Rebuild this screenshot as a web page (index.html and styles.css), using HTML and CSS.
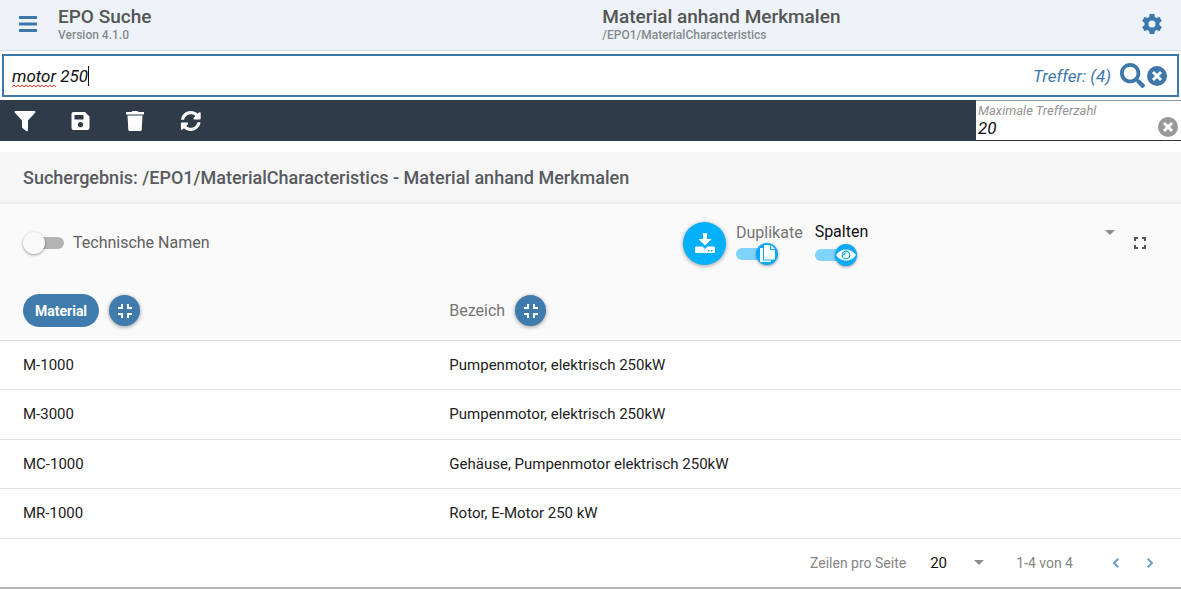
FILE: index.html
```html
<!DOCTYPE html>
<html lang="de">
<head>
<meta charset="utf-8">
<meta name="viewport" content="width=device-width, initial-scale=1">
<title>EPO Suche</title>
<link rel="stylesheet" href="styles.css">
</head>
<body>
<header class="app-header">
  <div class="brand">
    <button class="icon-btn menu-btn" type="button" aria-label="Menü">
      <svg width="18" height="16" viewBox="0 0 18 16"><path d="M0 0h18v3H0zM0 6.500h18v3H0zM0 13h18v3H0z"/></svg>
    </button>
    <div class="heading">
      <h1 class="title">EPO Suche</h1>
      <p class="subtitle">Version 4.1.0</p>
    </div>
  </div>
  <div class="heading context">
    <h2 class="title">Material anhand Merkmalen</h2>
    <p class="subtitle">/EPO1/MaterialCharacteristics</p>
  </div>
  <button class="icon-btn" type="button" aria-label="Einstellungen">
    <svg width="24" height="24" viewBox="0 0 24 24"><path d="M12,15.500A3.500,3.500 0 0,1 8.500,12A3.500,3.500 0 0,1 12,8.500A3.500,3.500 0 0,1 15.500,12A3.500,3.500 0 0,1 12,15.500M19.430,12.970C19.470,12.650 19.500,12.330 19.500,12C19.500,11.670 19.470,11.340 19.430,11L21.540,9.370C21.730,9.220 21.780,8.950 21.660,8.730L19.660,5.270C19.540,5.050 19.270,4.960 19.050,5.050L16.560,6.050C16.040,5.660 15.500,5.320 14.870,5.070L14.500,2.420C14.460,2.180 14.250,2 14,2H10C9.750,2 9.540,2.180 9.500,2.420L9.130,5.070C8.500,5.320 7.960,5.660 7.440,6.050L4.950,5.050C4.730,4.960 4.460,5.050 4.340,5.270L2.340,8.730C2.210,8.950 2.270,9.220 2.460,9.370L4.570,11C4.530,11.340 4.500,11.670 4.500,12C4.500,12.330 4.530,12.650 4.570,12.970L2.460,14.630C2.270,14.780 2.210,15.050 2.340,15.270L4.340,18.730C4.460,18.950 4.730,19.030 4.950,18.950L7.440,17.940C7.960,18.340 8.500,18.680 9.130,18.930L9.500,21.580C9.540,21.820 9.750,22 10,22H14C14.250,22 14.460,21.820 14.500,21.580L14.870,18.930C15.500,18.670 16.040,18.340 16.560,17.940L19.050,18.950C19.270,19.030 19.540,18.950 19.660,18.730L21.660,15.270C21.780,15.050 21.730,14.780 21.540,14.630L19.430,12.970Z"/></svg>
  </button>
</header>

<form class="search" role="search">
  <div class="search-field">
    <input class="search-input" type="text" value="motor 250" aria-label="Suche" spellcheck="false">
    <svg class="squiggle" width="44" height="4" viewBox="0 0 44 4"><path d="M0 3l2-2 2 2 2-2 2 2 2-2 2 2 2-2 2 2 2-2 2 2 2-2 2 2 2-2 2 2 2-2 2 2 2-2 2 2 2-2 2 2 2-2 2 2"/></svg>
    <span class="caret"></span>
  </div>
  <span class="hits">Treffer: (4)</span>
  <button class="icon-btn" type="button" aria-label="Suchen">
    <svg width="25" height="25" viewBox="0 0 512 512"><path d="M505 442.700L405.300 343c-4.500-4.500-10.600-7-17-7H372c27.600-35.300 44-79.700 44-128C416 93.100 322.900 0 208 0S0 93.100 0 208s93.100 208 208 208c48.300 0 92.700-16.400 128-44v16.300c0 6.400 2.500 12.500 7 17l99.700 99.700c9.400 9.400 24.600 9.400 33.900 0l28.300-28.300c9.400-9.400 9.400-24.600.1-34zM208 338c-72 0-130-58-130-130 0-72 58-130 130-130 72 0 130 58 130 130 0 72-58 130-130 130z"/></svg>
  </button>
  <button class="icon-btn" type="button" aria-label="Suche leeren">
    <svg width="20" height="20" viewBox="0 0 20 20"><circle cx="10" cy="10" r="10"/><path class="cross" d="M6 6l8 8M14 6l-8 8"/></svg>
  </button>
</form>

<div class="toolbar">
  <div class="tools">
    <button class="icon-btn tool" type="button" aria-label="Filter">
      <svg width="22" height="22" viewBox="0 0 22 22"><path d="M1.500 1h19c1 0 1.200 1 .6 1.700L14 10.500V20c0 1.200-.8 1.600-1.700 1L8.700 18.300c-.5-.4-.7-.8-.7-1.300v-6.500L.9 2.700C.3 2 .5 1 1.500 1z"/></svg>
    </button>
    <button class="icon-btn tool" type="button" aria-label="Speichern">
      <svg width="22" height="22" viewBox="0 0 22 22"><path fill-rule="evenodd" d="M4.500 2H16l4.500 4.500V18a2 2 0 0 1-2 2h-14a2 2 0 0 1-2-2V4a2 2 0 0 1 2-2zM5.500 5v4.500h9V5zM11.500 12a2.600 2.600 0 1 0 0 5.200 2.600 2.600 0 0 0 0-5.200z"/></svg>
    </button>
    <button class="icon-btn tool" type="button" aria-label="Löschen">
      <svg width="22" height="22" viewBox="0 0 22 22"><path d="M2 2h5.500l1-1h5l1 1H20v2.500H2zM3.500 5.500h15l-.8 14c-.1 1-.8 1.500-1.700 1.500H6c-.9 0-1.600-.5-1.700-1.500z"/></svg>
    </button>
    <button class="icon-btn tool" type="button" aria-label="Aktualisieren">
      <svg width="22" height="22" viewBox="-40 -20 552 552"><path d="M370.720 133.280C339.458 104.008 298.888 87.962 255.848 88c-77.458.068-144.328 53.178-162.791 126.850-1.344 5.363-6.122 9.150-11.651 9.150H24.103c-7.498 0-13.194-6.807-11.807-14.176C33.933 94.924 134.813 8 256 8c66.448 0 126.791 26.136 171.315 68.685L463.030 40.970C478.149 25.851 504 36.559 504 57.941V192c0 13.255-10.745 24-24 24H345.941c-21.382 0-32.090-25.851-16.971-40.971l41.750-41.749zM32 296h134.059c21.382 0 32.090 25.851 16.971 40.971l-41.750 41.750c31.262 29.273 71.835 45.319 114.876 45.280 77.418-.070 144.315-53.144 162.787-126.849 1.344-5.363 6.122-9.150 11.651-9.150h57.304c7.498 0 13.194 6.807 11.807 14.176C478.067 417.076 377.187 504 256 504c-66.448 0-126.791-26.136-171.315-68.685L48.970 471.030C33.851 486.149 8 475.441 8 454.059V320c0-13.255 10.745-24 24-24z"/></svg>
    </button>
  </div>
  <div class="max-hits">
    <div class="max-field">
      <label class="max-label" for="max">Maximale Trefferzahl</label>
      <input class="max-input" id="max" type="text" value="20">
    </div>
    <button class="icon-btn max-clear" type="button" aria-label="Leeren">
      <svg width="20" height="20" viewBox="0 0 20 20"><circle cx="10" cy="10" r="10"/><path class="cross" d="M6 6l8 8M14 6l-8 8"/></svg>
    </button>
  </div>
</div>

<main class="results">
  <h2 class="results-title">Suchergebnis: /EPO1/MaterialCharacteristics - Material anhand Merkmalen</h2>

  <div class="controls">
    <label class="switch-row">
      <span class="switch">
        <input class="track" type="checkbox">
        <span class="thumb"></span>
      </span>
      Technische Namen
    </label>
    <div class="actions">
      <button class="download" type="button" aria-label="Herunterladen">
        <svg width="22" height="22" viewBox="0 0 22 22"><path fill-rule="evenodd" d="M9 1h4v6h4.500L11 13.500 4.500 7H9zM2.500 14.500h6L11 17l2.500-2.500h6c1 0 1.500.5 1.500 1.500v3.500c0 1-.5 1.500-1.500 1.500h-17c-1 0-1.500-.5-1.500-1.500V16c0-1 .5-1.500 1.500-1.500zM14 18v1.500h1.500V18zM17 18v1.500h1.500V18z"/></svg>
      </button>
      <div class="option">
        <label class="option-label" for="dup">Duplikate</label>
        <span class="switch">
          <input class="track" id="dup" type="checkbox" checked>
          <span class="thumb"><svg width="22" height="22" viewBox="0 0 22 22"><path d="M4 5h3v12.500h8V19H4z"/><path d="M8 2h6v5h5v9.500H8zM15 2l4 4h-4z"/></svg></span>
        </span>
      </div>
      <div class="option option-wide">
        <div class="select-row">
          <select class="plain-select columns-select" id="cols" aria-label="Spalten"><option>Spalten</option></select>
          <svg class="arrow" width="10" height="5" viewBox="0 0 10 5"><path d="M0 0h10L5 5z"/></svg>
        </div>
        <span class="switch">
          <input class="track" type="checkbox" aria-label="Spalten anzeigen" checked>
          <span class="thumb"><svg width="22" height="22" viewBox="0 0 22 22"><path class="eye" d="M1 11C5.500 3.500 16.500 3.500 21 11 16.500 18.500 5.500 18.500 1 11z"/><circle class="iris" cx="11" cy="11" r="3.800"/><path class="iris" d="M9 11a2 2 0 0 1 2-2"/></svg></span>
        </span>
      </div>
      <button class="icon-btn fullscreen" type="button" aria-label="Vollbild">
        <svg width="12" height="12" viewBox="0 0 12 12"><path d="M0 0h4v2H2v2H0zM8 0h4v4h-2V2H8zM0 8h2v2h2v2H0zM10 8h2v4H8v-2h2z"/></svg>
      </button>
    </div>
  </div>

  <table class="table">
    <thead>
      <tr>
        <th class="col-material">
          <div class="head-cell">
            <button class="chip" type="button">Material</button>
            <button class="round" type="button" aria-label="Spalte Material verkleinern"><svg width="14" height="14" viewBox="0 0 14 14"><path d="M3 0h2v5H0V3h3zM9 0h2v3h3v2H9zM0 9h5v5H3v-3H0zM9 9h5v2h-3v3H9z"/></svg></button>
          </div>
        </th>
        <th>
          <div class="head-cell">
            <span>Bezeich</span>
            <button class="round" type="button" aria-label="Spalte Bezeich verkleinern"><svg width="14" height="14" viewBox="0 0 14 14"><path d="M3 0h2v5H0V3h3zM9 0h2v3h3v2H9zM0 9h5v5H3v-3H0zM9 9h5v2h-3v3H9z"/></svg></button>
          </div>
        </th>
      </tr>
    </thead>
    <tbody>
      <tr><td>M-1000</td><td>Pumpenmotor, elektrisch 250kW</td></tr>
      <tr><td>M-3000</td><td>Pumpenmotor, elektrisch 250kW</td></tr>
      <tr><td>MC-1000</td><td>Gehäuse, Pumpenmotor elektrisch 250kW</td></tr>
      <tr><td>MR-1000</td><td>Rotor, E-Motor 250 kW</td></tr>
    </tbody>
  </table>

  <footer class="pager">
    <label for="rows">Zeilen pro Seite</label>
    <div class="select-row rows-row">
      <select class="plain-select" id="rows"><option>20</option></select>
      <svg class="arrow" width="10" height="5" viewBox="0 0 10 5"><path d="M0 0h10L5 5z"/></svg>
    </div>
    <span class="range">1-4 von 4</span>
    <button class="icon-btn page-btn" type="button" aria-label="Vorherige Seite"><svg width="6" height="10" viewBox="0 0 6 10"><path d="M5.300 .7L1 5l4.300 4.300"/></svg></button>
    <button class="icon-btn page-btn" type="button" aria-label="Nächste Seite"><svg width="6" height="10" viewBox="0 0 6 10"><path d="M.7 .7L5 5 .7 9.300"/></svg></button>
  </footer>
</main>
</body>
</html>
```

FILE: styles.css
```css
* {
  box-sizing: border-box;
}

body {
  margin: 0;
  background: #fff;
  color: #212121;
  font: 16px/20px Roboto, "Liberation Sans", sans-serif;
}

h1, h2, p {
  margin: 0;
}

button, input, select {
  font: inherit;
  color: inherit;
}

svg {
  display: block;
  fill: currentColor;
}

.icon-btn {
  display: flex;
  align-items: center;
  justify-content: center;
  padding: 0;
  border: 0;
  background: none;
  color: #3e78ab;
}

.cross {
  fill: none;
  stroke: #fff;
  stroke-width: 3;
}

/* Header */
.app-header {
  display: flex;
  align-items: center;
  height: 51px;
  padding: 0 17px 2px 0;
  background: #edf3f8;
  border-bottom: 1px solid #d5dce2;
}

.brand {
  display: flex;
  align-items: center;
  gap: 21px;
  width: 51vw;
  padding-left: 19px;
}

.heading {
  padding-top: 2px;
}

.context {
  flex: 1;
}

.title {
  color: #555;
  font-size: 19px;
  font-weight: 500;
  line-height: 20px;
}

.subtitle {
  color: #868a8d;
  font-size: 12px;
  font-weight: 500;
  line-height: 16px;
}

/* Search */
.search {
  display: flex;
  align-items: center;
  height: 43px;
  margin: 3px 2px;
  padding: 0 10px 0 8px;
  border: 2px solid #3e78ab;
  background: #fff;
}

.search-field {
  position: relative;
  flex: 1;
}

.search-input {
  display: block;
  width: 100%;
  height: 24px;
  padding: 0;
  border: 0;
  outline: 0;
  background: none;
  color: #111;
  font-size: 17px;
  font-style: italic;
}

.squiggle {
  position: absolute;
  left: 0;
  bottom: 0;
  fill: none;
  stroke: #e53935;
}

.caret {
  position: absolute;
  left: 76px;
  top: 2px;
  width: 1px;
  height: 20px;
  background: #111;
}

.hits {
  margin-right: 9px;
  color: #3e78ab;
  font-size: 17px;
  font-style: italic;
}

.search .icon-btn + .icon-btn {
  margin-left: 2px;
}

/* Toolbar */
.toolbar {
  display: flex;
  height: 41px;
  background: #2f3b48;
}

.tools {
  display: flex;
  flex: 1;
  gap: 33px;
  padding-left: 14px;
}

.tool {
  color: #fff;
}

.max-hits {
  display: flex;
  align-items: flex-end;
  width: 205px;
  padding: 0 3px 3px 2px;
  background: #fff;
  border-top: 1px solid #999;
  border-bottom: 1px solid #333;
}

.max-field {
  flex: 1;
  min-width: 0;
}

.max-label {
  display: block;
  color: #949494;
  font-size: 13px;
  font-style: italic;
  line-height: 16px;
}

.max-input {
  display: block;
  width: 100%;
  height: 18px;
  padding: 0;
  border: 0;
  outline: 0;
  color: #111;
  font-size: 17px;
  font-style: italic;
}

.max-clear {
  color: #999;
}

/* Results */
.results {
  margin-top: 11px;
  border-bottom: 2px solid #b4b4b4;
}

.results-title {
  padding: 16px 23px 14px;
  background: #f6f6f6;
  border-bottom: 2px solid #ececec;
  color: #565b5f;
  font-size: 18px;
  font-weight: 500;
  line-height: 20px;
}

.controls {
  display: flex;
  align-items: center;
  height: 78px;
  padding-left: 23px;
  background: #fafafa;
}

.switch-row {
  display: flex;
  align-items: center;
  flex: 1;
  gap: 8px;
  color: #616161;
}

.switch {
  display: flow-root;
  position: relative;
  width: 42px;
  height: 22px;
}

.track {
  display: block;
  width: 38px;
  height: 12px;
  margin: 5px 0 5px 3px;
  border-radius: 6px;
  background: #b4b4b4;
  appearance: none;
}

.track:checked {
  margin-left: 0;
  background: #80d4fc;
}

.thumb {
  position: absolute;
  top: 0;
  left: 0;
  width: 22px;
  height: 22px;
  border-radius: 50%;
  background: #fafafa;
  box-shadow: 0 1px 3px #00000066;
  color: #fff;
  pointer-events: none;
}

.track:checked + .thumb {
  left: 20px;
  background: #06a9f8;
}

.eye {
  fill: #fff;
}

.iris {
  fill: none;
  stroke: #06a9f8;
  stroke-width: 1.200;
}

.actions {
  display: flex;
  align-items: center;
  flex: 0 0 498px;
}

.download {
  display: flex;
  align-items: center;
  justify-content: center;
  width: 43px;
  height: 43px;
  padding: 0;
  border: 0;
  border-radius: 50%;
  background: #03b0fa;
  box-shadow: 0 1px 4px #00000066;
  color: #fff;
}

.option {
  margin-left: 10px;
  padding-top: 2px;
}

.option-wide {
  flex: 1;
  margin-left: 12px;
}

.option-wide .switch {
  margin-top: 2px;
}

.option-label {
  display: block;
  color: #757575;
}

.select-row {
  display: flex;
  align-items: center;
}

.plain-select {
  flex: 1;
  min-width: 0;
  height: 20px;
  padding: 0;
  border: 0;
  outline: 0;
  background: none;
  color: #111;
  appearance: none;
}

.arrow {
  color: #8c8c8c;
}

.fullscreen {
  margin: 0 35px 0 19px;
  color: #555;
}

/* Table */
.table {
  width: 100%;
  border-collapse: collapse;
  table-layout: fixed;
}

.table th, .table td {
  height: 49px;
  padding: 0 24px 0 23px;
  border-bottom: 1px solid #e3e3e3;
  font-size: 15px;
  text-align: left;
}

.table th {
  height: 58px;
  background: #fafafa;
  color: #757575;
  font-size: 16px;
  font-weight: 400;
}

.table tr:nth-child(even) td {
  height: 50px;
}

.table .col-material {
  width: 36.1%;
}

.head-cell {
  display: flex;
  align-items: center;
  gap: 10px;
}

.chip {
  height: 33px;
  padding: 0 12px;
  border: 0;
  border-radius: 17px;
  background: #3f7bad;
  color: #fff;
  font-size: 14px;
  font-weight: 700;
}

.round {
  display: flex;
  align-items: center;
  justify-content: center;
  width: 31px;
  height: 31px;
  padding: 0;
  border: 0;
  border-radius: 50%;
  background: #3f7bad;
  box-shadow: 0 1px 4px #00000066;
  color: #fff;
}

/* Pager */
.pager {
  display: flex;
  align-items: center;
  justify-content: flex-end;
  height: 48px;
  padding-right: 18px;
  color: #858585;
  font-size: 14px;
}

.rows-row {
  width: 54px;
  margin: 0 32px 0 24px;
  font-size: 15px;
}

.range {
  margin-right: 30px;
}

.page-btn {
  width: 26px;
  height: 24px;
}

.page-btn + .page-btn {
  margin-left: 8px;
}

.page-btn path {
  fill: none;
  stroke: #6f9fc8;
  stroke-width: 2;
}
```
